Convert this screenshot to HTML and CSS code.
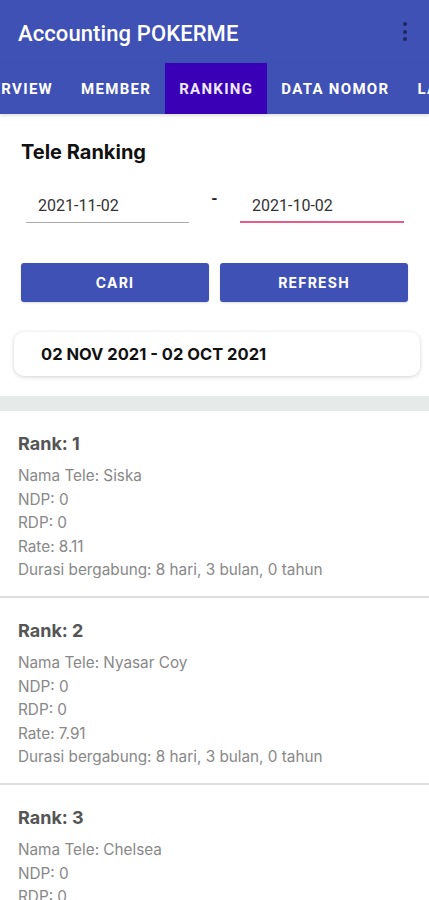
FILE: index.html
```html
<!DOCTYPE html>
<html lang="id">
<head>
<meta charset="utf-8">
<title>Accounting POKERME</title>
<link rel="stylesheet" href="styles.css">
</head>
<body>
<header class="appbar">
  <div class="title">Accounting POKERME</div>
  <div class="menu"><span></span><span></span><span></span></div>
</header>
<nav class="tabs">
  <div class="tab first">OVERVIEW</div>
  <div class="tab">MEMBER</div>
  <div class="tab active">RANKING</div>
  <div class="tab">DATA NOMOR</div>
  <div class="tab">LAPORAN</div>
</nav>
<section class="filter">
  <h1 class="heading">Tele Ranking</h1>
  <div class="dates">
    <div class="field">2021-11-02</div>
    <div class="dash">-</div>
    <div class="field focus">2021-10-02</div>
  </div>
  <div class="buttons">
    <button class="btn">CARI</button>
    <button class="btn">REFRESH</button>
  </div>
  <div class="range-card">02 NOV 2021 - 02 OCT 2021</div>
</section>
<div class="band"></div>
<section class="list">
  <div class="item">
    <div class="rank">Rank: 1</div>
    <div class="line">Nama Tele: Siska</div>
    <div class="line">NDP: 0</div>
    <div class="line">RDP: 0</div>
    <div class="line">Rate: 8.11</div>
    <div class="line">Durasi bergabung: 8 hari, 3 bulan, 0 tahun</div>
  </div>
  <div class="item">
    <div class="rank">Rank: 2</div>
    <div class="line">Nama Tele: Nyasar Coy</div>
    <div class="line">NDP: 0</div>
    <div class="line">RDP: 0</div>
    <div class="line">Rate: 7.91</div>
    <div class="line">Durasi bergabung: 8 hari, 3 bulan, 0 tahun</div>
  </div>
  <div class="item">
    <div class="rank">Rank: 3</div>
    <div class="line">Nama Tele: Chelsea</div>
    <div class="line">NDP: 0</div>
    <div class="line">RDP: 0</div>
    <div class="line">Rate: 7.50</div>
    <div class="line">Durasi bergabung: 8 hari, 3 bulan, 0 tahun</div>
  </div>
</section>
</body>
</html>
```
FILE: styles.css
```css
* { box-sizing: border-box; }
html, body { margin: 0; padding: 0; background: #fff; }
body { width: 429px; height: 900px; overflow: hidden; font-family: Roboto, "Noto Sans", sans-serif; }

.appbar {
  height: 63px;
  background: #3f51b5;
  display: flex;
  align-items: center;
  justify-content: space-between;
  padding: 0 22px 0 18px;
}
.title { color: #fff; font-size: 22px; font-weight: 500; letter-spacing: 0.1px; margin-top: 4px; }
.menu { display: flex; flex-direction: column; gap: 3.5px; }
.menu span { width: 4px; height: 4px; border-radius: 50%; background: #1f2660; }

.tabs {
  height: 51px;
  background: #3f51b5;
  display: flex;
  white-space: nowrap;
  overflow: hidden;
  box-shadow: 0 2px 3px rgba(0,0,0,0.12);
  position: relative;
}
.tab {
  flex: none;
  display: flex;
  align-items: center;
  padding: 0 14px;
  color: #fff;
  font-size: 15px;
  font-weight: 700;
  letter-spacing: 1.3px;
}
.tab.first { margin-left: -45px; }
.tab.active { background: #3900b5; color: #efe8ff; }

.heading {
  margin: 26px 0 0 21px;
  font-family: Inter, "Noto Sans", sans-serif;
  font-size: 20px;
  font-weight: 700;
  line-height: 24px;
  color: #111;
}
.dates {
  display: flex;
  align-items: flex-start;
  margin: 22px 0 0 26px;
}
.field {
  width: 163px;
  height: 37px;
  padding: 10px 0 0 12px;
  font-size: 16px;
  line-height: 20px;
  color: #333;
  border-bottom: 1.5px solid #aaa;
}
.field.focus { width: 164px; border-bottom: 2px solid #e95a85; }
.dash {
  width: 51px;
  text-align: center;
  font-size: 16px;
  font-weight: 700;
  color: #222;
  line-height: 16px;
  padding-top: 5px;
}
.buttons {
  display: flex;
  gap: 11px;
  margin: 40px 0 0 21px;
}
.btn {
  width: 188px;
  height: 39px;
  border: none;
  border-radius: 3px;
  background: #3f51b5;
  color: #fff;
  font-family: Inter, "Noto Sans", sans-serif;
  font-size: 14px;
  font-weight: 700;
  letter-spacing: 1.2px;
  box-shadow: 0 1px 2px rgba(0,0,0,0.15);
  padding: 0;
}
.range-card {
  margin: 30px 9px 0 14px;
  height: 44px;
  border-radius: 10px;
  background: #fff;
  box-shadow: 0 1px 4px rgba(0,0,0,0.18);
  display: flex;
  align-items: center;
  padding-left: 27px;
  font-family: Inter, "Noto Sans", sans-serif;
  font-size: 16.5px;
  font-weight: 700;
  color: #111;
}
.band { height: 15px; background: #e6ebe9; margin-top: 20px; }

.item {
  padding: 21px 0 14px 18px;
  border-bottom: 2px solid #dedede;
}
.rank {
  font-family: Inter, "Noto Sans", sans-serif;
  font-size: 18px;
  font-weight: 700;
  line-height: 24px;
  color: #555;
  margin-bottom: 8px;
}
.line {
  font-family: Inter, "Noto Sans", sans-serif;
  font-size: 15.3px;
  line-height: 23.6px;
  color: #888;
}
```
